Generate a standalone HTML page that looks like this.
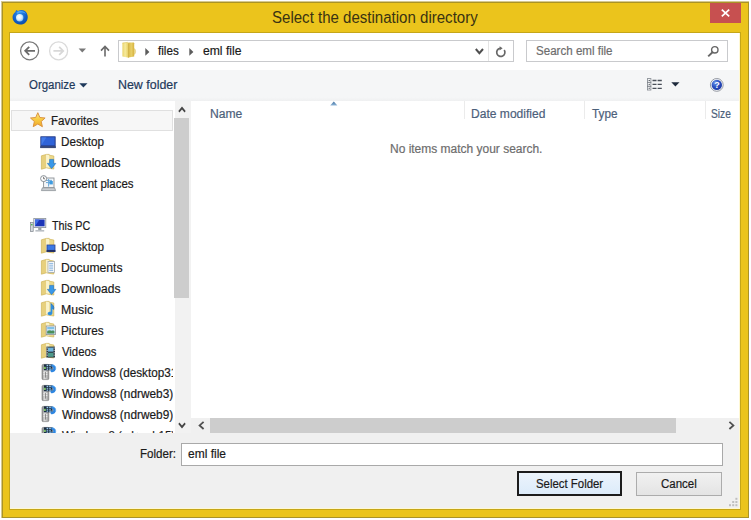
<!DOCTYPE html>
<html lang="en">
<head>
<meta charset="utf-8">
<title>Select the destination directory</title>
<style>
html,body{margin:0;padding:0;background:#fff;}
body{width:751px;height:520px;position:relative;overflow:hidden;font-family:"Liberation Sans",sans-serif;font-size:12px;}
.abs{position:absolute;}
.t{position:absolute;white-space:nowrap;font-family:"Liberation Sans",sans-serif;transform-origin:0 0;-webkit-text-stroke:0.2px currentColor;}
#title{-webkit-text-stroke:0;}
svg{position:absolute;overflow:visible;}
#win{left:1px;top:1px;width:748px;height:517px;background:#ebc41c;}
#wine{left:1px;top:1px;width:747px;height:516px;border-left:1px solid #d6c98f;border-top:1px solid #d6c98f;}
#winb{left:2px;top:2px;width:745px;height:514px;border:1px solid #a99328;}
#content{left:9.6px;top:32.6px;width:730.4px;height:476.2px;background:#fff8d2;box-shadow:0 0 0 1px rgba(160,135,20,.5);}
#content2{left:9.6px;top:32.6px;width:729.4px;height:475.4px;background:#fff;}
#toolbar{left:9.6px;top:69.5px;width:729.4px;height:31px;background:linear-gradient(#f5f6f7 0,#f5f6f7 88%,#eff0f1 100%);}
#footer{left:9.6px;top:433px;width:729.4px;height:75px;background:#f0f0f0;}
#closeb{left:710.4px;top:2.5px;width:30.4px;height:20.2px;background:#c75050;}
#addr{left:118px;top:40px;width:394px;height:20px;border:1px solid #c9cacd;background:#fff;}
#addrdiv{left:488px;top:41px;width:1px;height:20px;background:#e4e4e4;}
#search{left:526px;top:40px;width:200px;height:20px;border:1px solid #c9cacd;background:#fff;}
#favbox{left:11px;top:110px;width:160px;height:19px;border:1px solid #e0e0e0;background:#f7f7f7;}
#navclip{left:9.6px;top:100.8px;width:163.6px;height:332px;overflow:hidden;}
#navsb{left:174.5px;top:100.8px;width:16.5px;height:332.2px;background:#f2f2f2;}
#navthumb{left:174.1px;top:117.7px;width:15px;height:180.8px;background:#cdcdcd;}
#hsb{left:191px;top:417.8px;width:548px;height:15.2px;background:#f0f0f0;}
#hthumb{left:210px;top:417.8px;width:466px;height:15.2px;background:#cdcdcd;}
.coldiv{width:1px;top:100.6px;height:18.6px;background:#ebebeb;}
#finput{left:180.7px;top:443.3px;width:540.6px;height:20.7px;border:1px solid #a9a9a9;background:#fff;}
#bsel_b{left:517px;top:471px;width:101px;height:21.4px;border:2px solid #1c1c1c;background:linear-gradient(#ecf4fc,#dcebfa);}
#bcan_b{left:636px;top:472.4px;width:83.6px;height:21.6px;border:1px solid #acacac;background:linear-gradient(#f1f1f1,#e4e4e4);}
</style>
</head>
<body>
<svg id="shared" width="0" height="0" style="left:0;top:0"><defs><linearGradient id="ndg" x1="0" y1="0" x2="1" y2="0"><stop offset="0" stop-color="#8a8a8a"/><stop offset=".35" stop-color="#dcdcdc"/><stop offset=".7" stop-color="#bdbdbd"/><stop offset="1" stop-color="#8f8f8f"/></linearGradient></defs></svg>
<div id="win" class="abs"></div>
<div id="wine" class="abs"></div>
<div id="winb" class="abs"></div>
<div id="content" class="abs"></div>
<div id="content2" class="abs"></div>
<div id="toolbar" class="abs"></div>
<div id="footer" class="abs"></div>

<!-- title bar -->
<svg id="appicon" style="left:12px;top:9px" width="17" height="17" viewBox="0 0 17 17">
  <defs>
    <radialGradient id="apg" cx=".45" cy=".3" r=".75"><stop offset="0" stop-color="#2f8ff0"/><stop offset=".6" stop-color="#1260c8"/><stop offset="1" stop-color="#0a4aa6"/></radialGradient>
    <radialGradient id="apo" cx=".42" cy=".4" r=".6"><stop offset="0" stop-color="#ffffff"/><stop offset=".6" stop-color="#d9eefa"/><stop offset="1" stop-color="#8cc4ec"/></radialGradient>
  </defs>
  <path d="M3.2 3.2 L4.2 0.9 L6 2 C9.6 -0.2 14.6 1.4 15.6 6.4 C16.6 11.6 12.6 15.8 8 15.6 C3.4 15.4 0.2 11.8 0.6 7.6 C0.8 5.8 1.8 4.2 3.2 3.2 Z" fill="url(#apg)"/>
  <path d="M4.4 3.4 C7.4 1 12.6 1.6 14.4 5.4 C12 3.2 8 3 5.4 4.8 Z" fill="#4aa6f6"/>
  <circle cx="7.7" cy="8.7" r="3.7" fill="url(#apo)"/>
</svg>
<span id="title" class="t" style="left:272.30px;top:8.25px;font-size:16px;line-height:19px;transform:scaleX(0.9402);color:#3a3312;">Select the destination directory</span>
<div id="closeb" class="abs"></div>
<svg style="left:721.1px;top:9.3px" width="9" height="8" viewBox="0 0 9 8"><path d="M0.8 0.6 L8.2 7.4 M8.2 0.6 L0.8 7.4" stroke="#fff" stroke-width="1.7" fill="none"/></svg>

<!-- nav row -->
<svg style="left:19px;top:40px" width="22" height="22" viewBox="0 0 22 22">
  <circle cx="10.6" cy="10.8" r="9" fill="#fff" stroke="#787878" stroke-width="1.3"/>
  <path d="M16 10.8 H6.4 M10.2 6.8 L6.2 10.8 L10.2 14.8" stroke="#6a6a6a" stroke-width="1.8" fill="none"/>
</svg>
<svg style="left:47.5px;top:40px" width="22" height="22" viewBox="0 0 22 22">
  <circle cx="10.6" cy="10.9" r="9" fill="#fff" stroke="#dadada" stroke-width="1.3"/>
  <path d="M5.4 10.9 H15 M11.2 6.9 L15.2 10.9 L11.2 14.9" stroke="#d8d8d8" stroke-width="1.8" fill="none"/>
</svg>
<svg style="left:78.2px;top:48.2px" width="9" height="5" viewBox="0 0 9 5"><path d="M0.6 0.4 H8 L4.3 4.4 Z" fill="#787878"/></svg>
<svg style="left:100.2px;top:45px" width="10" height="12" viewBox="0 0 10 12"><path d="M5 11.4 V1.8 M1 5.6 L5 1.4 L9 5.6" stroke="#6a6a6a" stroke-width="1.6" fill="none"/></svg>

<div id="addr" class="abs"></div>
<div id="addrdiv" class="abs"></div>
<svg id="addrfolder" style="left:121.6px;top:41.6px" width="15" height="17" viewBox="0 0 15 17">
  <defs><linearGradient id="afg" x1="0" y1="0" x2="1" y2="0"><stop offset="0" stop-color="#e9d36a"/><stop offset=".45" stop-color="#f6ea9e"/><stop offset="1" stop-color="#e6cc5c"/></linearGradient>
  <linearGradient id="afg2" x1="0" y1="0" x2="1" y2="0"><stop offset="0" stop-color="#d9b744"/><stop offset=".5" stop-color="#e8cf68"/><stop offset="1" stop-color="#d6b23e"/></linearGradient></defs>
  <path d="M6.4 0.5 L11.8 0.5 L12.2 1.2 V14.4 L6.4 15.4 Z" fill="url(#afg2)"/>
  <path d="M12.2 6.6 C13.3 7 13.6 8.2 13.6 9.6 C13.6 11 13.2 12 12.2 12.4 Z" fill="#ecd98a" stroke="#d8bd5c" stroke-width=".4"/>
  <path d="M0.4 1 L5.6 0.4 L6.6 1.2 V15.8 L5.6 15.6 L0.4 14.6 Z" fill="url(#afg)"/>
  <path d="M6.5 1.2 V15.6" stroke="#c9a83a" stroke-width=".7"/>
  <path d="M0.4 1 L5.6 0.4 L6.6 1.2" fill="none" stroke="#dcc255" stroke-width=".6"/>
</svg>
<svg style="left:144.8px;top:47.6px" width="5" height="8" viewBox="0 0 5 8"><path d="M0.3 0.1 L4.4 3.9 L0.3 7.7 Z" fill="#5c5c5c"/></svg>
<span id="bc1" class="t" style="left:158.00px;top:43.75px;font-size:12.5px;line-height:15px;transform:scaleX(0.9327);color:#1a1a1a;">files</span>
<svg style="left:188.6px;top:47.6px" width="5" height="8" viewBox="0 0 5 8"><path d="M0.3 0.1 L4.4 3.9 L0.3 7.7 Z" fill="#5c5c5c"/></svg>
<span id="bc2" class="t" style="left:202.50px;top:43.75px;font-size:12.5px;line-height:15px;transform:scaleX(0.9712);color:#1a1a1a;">eml file</span>
<svg style="left:475.3px;top:48.2px" width="9" height="7" viewBox="0 0 9 7"><path d="M0.8 1 L4.4 5.2 L8 1" stroke="#4f4f4f" stroke-width="2" fill="none"/></svg>
<svg style="left:495px;top:44.6px" width="12" height="13" viewBox="0 0 12 13">
  <path d="M9.2 5 A4.1 4.1 0 1 1 5 3.3" stroke="#686868" stroke-width="1.7" fill="none"/>
  <path d="M4.6 1.2 L7.6 3.3 L4.6 5.4 Z" fill="#686868"/>
</svg>
<div id="search" class="abs"></div>
<span id="srch" class="t" style="left:535.60px;top:43.75px;font-size:12.5px;line-height:15px;transform:scaleX(0.9260);color:#6d6d6d;">Search eml file</span>
<svg style="left:707.2px;top:45.2px" width="13" height="13" viewBox="0 0 13 13">
  <circle cx="7.8" cy="4.8" r="3.2" fill="none" stroke="#666" stroke-width="1.4"/>
  <path d="M5.5 7.2 L1.2 11.4" stroke="#666" stroke-width="1.9"/>
</svg>

<!-- toolbar -->
<span id="org" class="t" style="left:28.50px;top:77.75px;font-size:12.5px;line-height:15px;transform:scaleX(0.9159);color:#1e395b;">Organize</span>
<svg style="left:78.8px;top:83.3px" width="9" height="5" viewBox="0 0 9 5"><path d="M0.3 0.3 H8.5 L4.4 4.6 Z" fill="#1e395b"/></svg>
<span id="newf" class="t" style="left:118.01px;top:77.75px;font-size:12.5px;line-height:15px;transform:scaleX(0.9934);color:#1e395b;">New folder</span>
<svg id="viewicon" style="left:646.5px;top:77.9px" width="16" height="14" viewBox="0 0 16 14">
  <g fill="#fff" stroke="#7d838a" stroke-width=".8">
    <rect x=".5" y=".6" width="3.4" height="3.6"/><rect x=".5" y="4.5" width="3.4" height="3.6"/><rect x=".5" y="8.4" width="3.4" height="3.6"/>
  </g>
  <g fill="#3f4650"><rect x="1.6" y="1.9" width="1.2" height="1.1"/><rect x="1.6" y="5.8" width="1.2" height="1.1"/><rect x="1.6" y="9.7" width="1.2" height="1.1"/></g>
  <g stroke="#4a5059" stroke-width="1.3">
    <path d="M5.5 2.5 H9.5 M10.6 2.5 H14.8 M5.5 6.4 H9.5 M10.6 6.4 H14.8 M5.5 10.3 H9.5 M10.6 10.3 H14.8"/>
  </g>
</svg>
<svg style="left:671.4px;top:82.3px" width="9" height="5" viewBox="0 0 9 5"><path d="M0.3 0.3 H8.5 L4.4 4.6 Z" fill="#1e2a3c"/></svg>
<svg id="helpicon" style="left:709.2px;top:76.7px" width="16" height="16" viewBox="0 0 16 16">
  <defs><radialGradient id="hpg" cx=".35" cy=".3" r=".8"><stop offset="0" stop-color="#6f97ea"/><stop offset=".5" stop-color="#2a4fc0"/><stop offset="1" stop-color="#1a35a0"/></radialGradient></defs>
  <circle cx="7.8" cy="7.9" r="6.4" fill="#f4f6fa" stroke="#8b9099" stroke-width=".9"/>
  <circle cx="7.8" cy="7.9" r="5.2" fill="url(#hpg)"/>
  <text x="7.9" y="11.1" text-anchor="middle" font-family="Liberation Sans, sans-serif" font-weight="bold" font-size="9" fill="#fff">?</text>
</svg>

<!-- nav pane -->
<div id="navclip" class="abs"><div class="abs" style="left:-9.6px;top:-100.8px;width:200px;height:460px;">
<div id="favbox" class="abs"></div>
<svg style="left:29.8px;top:112.2px" width="16" height="16" viewBox="0 0 16 16"><defs><linearGradient id="stg" x1="0" y1="0" x2="0" y2="1"><stop offset="0" stop-color="#fbe88a"/><stop offset=".45" stop-color="#f8cd45"/><stop offset="1" stop-color="#f0a92a"/></linearGradient></defs><path d="M7.8 0.7 L9.9 5.5 L15.1 6 L11.2 9.5 L12.4 14.7 L7.8 12 L3.2 14.7 L4.4 9.5 L0.5 6 L5.7 5.5 Z" fill="url(#stg)" stroke="#dc9440" stroke-width="1" stroke-linejoin="round"/></svg>
<svg style="left:40px;top:135.7px" width="17" height="13" viewBox="0 0 17 13"><rect x="0.3" y="0.3" width="15.4" height="11.8" rx="0.6" fill="#27408f"/><rect x="1.4" y="1.3" width="13.2" height="8" fill="#2f63d8"/><path d="M1.4 9.3 L6.5 1.3 H1.4 Z" fill="#4d86ee" opacity=".7"/><rect x="0.3" y="10.2" width="15.4" height="1.9" fill="#3a4a78"/></svg>
<svg style="left:41px;top:154.0px" width="16" height="16" viewBox="0 0 16 16"><path d="M0.4 1.8 L5.4 0.4 V13.8 L0.4 15.2 Z" fill="#e7d07e"/><path d="M5.4 0.4 H8.2 V14.4 L5.4 13.8 Z" fill="#faf3c9"/><path d="M8.2 1.2 L12.8 2 V15 L8.2 14.4 Z" fill="#ecd98c"/><path d="M0.4 1.8 L5.4 0.4 H8.2 V1.2 L12.8 2 V15 L8.2 14.4 L5.4 13.8 L0.4 15.2 Z" fill="none" stroke="#d0b458" stroke-width=".7"/><path d="M8.6 5.4 H12.6 V9.4 H14.8 L10.6 14.6 L6.4 9.4 H8.6 Z" fill="#3a98e8" stroke="#1e6fc0" stroke-width=".6"/></svg>
<svg style="left:40px;top:175.3px" width="17" height="17" viewBox="0 0 17 17"><rect x="3.6" y="3" width="10.4" height="9.6" fill="#f4f6f8" stroke="#8a9096" stroke-width=".9"/><path d="M6 5.4 H12 M6 7.6 H12 M8.6 4 V11.6" stroke="#69a7d8" stroke-width="1"/><rect x="9.4" y="6" width="3.4" height="3.4" fill="#3d9be0"/><path d="M2.4 12.8 H14.6 L15.6 15.6 H1.4 Z" fill="#c9cdd1" stroke="#8a9096" stroke-width=".8"/><circle cx="3.6" cy="3.6" r="3" fill="#fff" stroke="#7d848b" stroke-width=".9"/><path d="M3.6 1.8 V3.8 H5" stroke="#555" stroke-width=".8" fill="none"/></svg>
<svg style="left:30px;top:217.6px" width="17" height="15" viewBox="0 0 17 15"><rect x="3.8" y="0.4" width="12" height="9.2" fill="#e8ecf0" stroke="#8a9199" stroke-width=".8"/><rect x="5" y="1.5" width="9.6" height="6.8" fill="#1c35b8"/><path d="M5 8.3 L9.6 1.5 H5 Z" fill="#3f6de6"/><rect x="8.2" y="9.8" width="3.2" height="2.2" fill="#9aa1a8"/><rect x="5.4" y="12" width="8.8" height="1.6" fill="#b9bfc5"/><rect x="0.4" y="4.6" width="2.8" height="9" fill="#d5d9de" stroke="#7f868d" stroke-width=".7"/><rect x="1.1" y="6" width="1.4" height="1.4" fill="#49b04b"/></svg>
<svg style="left:41px;top:238.0px" width="16" height="16" viewBox="0 0 16 16"><path d="M0.4 1.8 L5.4 0.4 V13.8 L0.4 15.2 Z" fill="#e7d07e"/><path d="M5.4 0.4 H8.2 V14.4 L5.4 13.8 Z" fill="#faf3c9"/><path d="M8.2 1.2 L12.8 2 V15 L8.2 14.4 Z" fill="#ecd98c"/><path d="M0.4 1.8 L5.4 0.4 H8.2 V1.2 L12.8 2 V15 L8.2 14.4 L5.4 13.8 L0.4 15.2 Z" fill="none" stroke="#d0b458" stroke-width=".7"/><rect x="5.6" y="6.6" width="8.8" height="7.2" fill="#2a3f8c"/><rect x="6.4" y="7.3" width="7.2" height="4.6" fill="#3a78e4"/><rect x="5.6" y="12.2" width="8.8" height="1.6" fill="#1d2b60"/></svg>
<svg style="left:41px;top:259.0px" width="16" height="16" viewBox="0 0 16 16"><path d="M0.4 1.8 L5.4 0.4 V13.8 L0.4 15.2 Z" fill="#e7d07e"/><path d="M5.4 0.4 H8.2 V14.4 L5.4 13.8 Z" fill="#faf3c9"/><path d="M8.2 1.2 L12.8 2 V15 L8.2 14.4 Z" fill="#ecd98c"/><path d="M0.4 1.8 L5.4 0.4 H8.2 V1.2 L12.8 2 V15 L8.2 14.4 L5.4 13.8 L0.4 15.2 Z" fill="none" stroke="#d0b458" stroke-width=".7"/><rect x="7" y="2.4" width="6.4" height="11" fill="#fbfcfd" stroke="#9aa0a6" stroke-width=".7"/><path d="M8.2 4.4 H12.2 M8.2 6.2 H12.2 M8.2 8 H12.2 M8.2 9.8 H12.2 M8.2 11.6 H12.2" stroke="#6fa3d8" stroke-width=".8"/></svg>
<svg style="left:41px;top:280.0px" width="16" height="16" viewBox="0 0 16 16"><path d="M0.4 1.8 L5.4 0.4 V13.8 L0.4 15.2 Z" fill="#e7d07e"/><path d="M5.4 0.4 H8.2 V14.4 L5.4 13.8 Z" fill="#faf3c9"/><path d="M8.2 1.2 L12.8 2 V15 L8.2 14.4 Z" fill="#ecd98c"/><path d="M0.4 1.8 L5.4 0.4 H8.2 V1.2 L12.8 2 V15 L8.2 14.4 L5.4 13.8 L0.4 15.2 Z" fill="none" stroke="#d0b458" stroke-width=".7"/><path d="M8.6 5.4 H12.6 V9.4 H14.8 L10.6 14.6 L6.4 9.4 H8.6 Z" fill="#3a98e8" stroke="#1e6fc0" stroke-width=".6"/></svg>
<svg style="left:41px;top:301.0px" width="16" height="16" viewBox="0 0 16 16"><path d="M0.4 1.8 L5.4 0.4 V13.8 L0.4 15.2 Z" fill="#e7d07e"/><path d="M5.4 0.4 H8.2 V14.4 L5.4 13.8 Z" fill="#faf3c9"/><path d="M8.2 1.2 L12.8 2 V15 L8.2 14.4 Z" fill="#ecd98c"/><path d="M0.4 1.8 L5.4 0.4 H8.2 V1.2 L12.8 2 V15 L8.2 14.4 L5.4 13.8 L0.4 15.2 Z" fill="none" stroke="#d0b458" stroke-width=".7"/><path d="M9.6 2.4 C11.8 3.6 13.4 5.6 12.6 8.6 L11.4 8 V12.2 C11.4 14.6 6.6 15 6.6 12.6 C6.6 10.8 9 10.4 9.6 10.8 Z" fill="#2f8fe0"/><path d="M9.6 2.4 C11.8 3.6 13.4 5.6 12.6 8.6" fill="none" stroke="#1b5fa8" stroke-width=".7"/></svg>
<svg style="left:41px;top:322.0px" width="16" height="16" viewBox="0 0 16 16"><path d="M0.4 1.8 L5.4 0.4 V13.8 L0.4 15.2 Z" fill="#e7d07e"/><path d="M5.4 0.4 H8.2 V14.4 L5.4 13.8 Z" fill="#faf3c9"/><path d="M8.2 1.2 L12.8 2 V15 L8.2 14.4 Z" fill="#ecd98c"/><path d="M0.4 1.8 L5.4 0.4 H8.2 V1.2 L12.8 2 V15 L8.2 14.4 L5.4 13.8 L0.4 15.2 Z" fill="none" stroke="#d0b458" stroke-width=".7"/><rect x="5.2" y="4" width="9.2" height="8.6" fill="#f6f8fa" stroke="#8b9197" stroke-width=".8"/><rect x="6.2" y="5" width="7.2" height="6.6" fill="#7fc0e8"/><path d="M6.2 9.4 L8.6 7.4 L10.6 9 L12 8 L13.4 9.2 V11.6 H6.2 Z" fill="#4d8f5a"/><path d="M6.2 7.8 H13.4" stroke="#e8f4fb" stroke-width="1"/></svg>
<svg style="left:41px;top:343.0px" width="16" height="16" viewBox="0 0 16 16"><path d="M0.4 1.8 L5.4 0.4 V13.8 L0.4 15.2 Z" fill="#e7d07e"/><path d="M5.4 0.4 H8.2 V14.4 L5.4 13.8 Z" fill="#faf3c9"/><path d="M8.2 1.2 L12.8 2 V15 L8.2 14.4 Z" fill="#ecd98c"/><path d="M0.4 1.8 L5.4 0.4 H8.2 V1.2 L12.8 2 V15 L8.2 14.4 L5.4 13.8 L0.4 15.2 Z" fill="none" stroke="#d0b458" stroke-width=".7"/><rect x="5.4" y="3.6" width="8.6" height="11" fill="#2e3a44"/><rect x="7" y="4.6" width="5.4" height="4" fill="#6fb4dc"/><rect x="7" y="9.8" width="5.4" height="4" fill="#4d9a8a"/><path d="M6.2 4.4 V14.4 M13.2 4.4 V14.4" stroke="#dfe5ea" stroke-width=".9" stroke-dasharray="1.2 1.2"/></svg>
<svg style="left:41px;top:364.1px" width="16" height="17" viewBox="0 0 16 17"><rect x="1" y="0.4" width="6.8" height="15.2" rx="1.2" fill="url(#ndg)" stroke="#777" stroke-width=".6"/><path d="M2.4 8.6 H6.4 M2.4 10.4 H6.4" stroke="#f1f1f1" stroke-width=".9"/><path d="M4.4 8 V13.6" stroke="#6f6f6f" stroke-width=".8"/><rect x="2.8" y="0.3" width="8.8" height="6" fill="#1c2d42"/><rect x="2.8" y="2.8" width="2" height="2.2" fill="#7fbf6a"/><path d="M5.6 1.4 H7.2 M8.2 1.4 H9.8 M5.6 3.3 H7.2 M8.2 3.3 H9.8 M5.6 5.1 H7.2 M8.2 5.1 H10.6" stroke="#9ccdf2" stroke-width="1.1"/><path d="M10.4 0.9 C13.8 0.4 15.4 3.2 14.4 6 C13.8 7.6 12 8.6 9.8 8 L9.4 5.6 C11 6.2 12 5.6 12.2 4.4 C12.4 3.2 11.6 2.6 10.4 2.8 Z" fill="#2f86e0"/><path d="M10.4 0.9 C13.8 0.4 15.4 3.2 14.4 6" fill="none" stroke="#5aa8f0" stroke-width=".8"/></svg>
<svg style="left:41px;top:385.1px" width="16" height="17" viewBox="0 0 16 17"><rect x="1" y="0.4" width="6.8" height="15.2" rx="1.2" fill="url(#ndg)" stroke="#777" stroke-width=".6"/><path d="M2.4 8.6 H6.4 M2.4 10.4 H6.4" stroke="#f1f1f1" stroke-width=".9"/><path d="M4.4 8 V13.6" stroke="#6f6f6f" stroke-width=".8"/><rect x="2.8" y="0.3" width="8.8" height="6" fill="#1c2d42"/><rect x="2.8" y="2.8" width="2" height="2.2" fill="#7fbf6a"/><path d="M5.6 1.4 H7.2 M8.2 1.4 H9.8 M5.6 3.3 H7.2 M8.2 3.3 H9.8 M5.6 5.1 H7.2 M8.2 5.1 H10.6" stroke="#9ccdf2" stroke-width="1.1"/><path d="M10.4 0.9 C13.8 0.4 15.4 3.2 14.4 6 C13.8 7.6 12 8.6 9.8 8 L9.4 5.6 C11 6.2 12 5.6 12.2 4.4 C12.4 3.2 11.6 2.6 10.4 2.8 Z" fill="#2f86e0"/><path d="M10.4 0.9 C13.8 0.4 15.4 3.2 14.4 6" fill="none" stroke="#5aa8f0" stroke-width=".8"/></svg>
<svg style="left:41px;top:406.1px" width="16" height="17" viewBox="0 0 16 17"><rect x="1" y="0.4" width="6.8" height="15.2" rx="1.2" fill="url(#ndg)" stroke="#777" stroke-width=".6"/><path d="M2.4 8.6 H6.4 M2.4 10.4 H6.4" stroke="#f1f1f1" stroke-width=".9"/><path d="M4.4 8 V13.6" stroke="#6f6f6f" stroke-width=".8"/><rect x="2.8" y="0.3" width="8.8" height="6" fill="#1c2d42"/><rect x="2.8" y="2.8" width="2" height="2.2" fill="#7fbf6a"/><path d="M5.6 1.4 H7.2 M8.2 1.4 H9.8 M5.6 3.3 H7.2 M8.2 3.3 H9.8 M5.6 5.1 H7.2 M8.2 5.1 H10.6" stroke="#9ccdf2" stroke-width="1.1"/><path d="M10.4 0.9 C13.8 0.4 15.4 3.2 14.4 6 C13.8 7.6 12 8.6 9.8 8 L9.4 5.6 C11 6.2 12 5.6 12.2 4.4 C12.4 3.2 11.6 2.6 10.4 2.8 Z" fill="#2f86e0"/><path d="M10.4 0.9 C13.8 0.4 15.4 3.2 14.4 6" fill="none" stroke="#5aa8f0" stroke-width=".8"/></svg>
<svg style="left:41px;top:427.1px" width="16" height="17" viewBox="0 0 16 17"><rect x="1" y="0.4" width="6.8" height="15.2" rx="1.2" fill="url(#ndg)" stroke="#777" stroke-width=".6"/><path d="M2.4 8.6 H6.4 M2.4 10.4 H6.4" stroke="#f1f1f1" stroke-width=".9"/><path d="M4.4 8 V13.6" stroke="#6f6f6f" stroke-width=".8"/><rect x="2.8" y="0.3" width="8.8" height="6" fill="#1c2d42"/><rect x="2.8" y="2.8" width="2" height="2.2" fill="#7fbf6a"/><path d="M5.6 1.4 H7.2 M8.2 1.4 H9.8 M5.6 3.3 H7.2 M8.2 3.3 H9.8 M5.6 5.1 H7.2 M8.2 5.1 H10.6" stroke="#9ccdf2" stroke-width="1.1"/><path d="M10.4 0.9 C13.8 0.4 15.4 3.2 14.4 6 C13.8 7.6 12 8.6 9.8 8 L9.4 5.6 C11 6.2 12 5.6 12.2 4.4 C12.4 3.2 11.6 2.6 10.4 2.8 Z" fill="#2f86e0"/><path d="M10.4 0.9 C13.8 0.4 15.4 3.2 14.4 6" fill="none" stroke="#5aa8f0" stroke-width=".8"/></svg>
<span id="n0" class="t" style="left:50.58px;top:113.75px;font-size:12.5px;line-height:15px;transform:scaleX(0.9232);color:#1a1a1a;">Favorites</span><span id="n1" class="t" style="left:60.56px;top:134.75px;font-size:12.5px;line-height:15px;transform:scaleX(0.9353);color:#1a1a1a;">Desktop</span><span id="n2" class="t" style="left:60.54px;top:155.75px;font-size:12.5px;line-height:15px;transform:scaleX(0.9605);color:#1a1a1a;">Downloads</span><span id="n3" class="t" style="left:60.58px;top:176.75px;font-size:12.5px;line-height:15px;transform:scaleX(0.9158);color:#1a1a1a;">Recent places</span><span id="n4" class="t" style="left:52.00px;top:218.75px;font-size:12.5px;line-height:15px;transform:scaleX(0.8621);color:#1a1a1a;">This PC</span><span id="n5" class="t" style="left:60.56px;top:239.75px;font-size:12.5px;line-height:15px;transform:scaleX(0.9353);color:#1a1a1a;">Desktop</span><span id="n6" class="t" style="left:60.53px;top:260.75px;font-size:12.5px;line-height:15px;transform:scaleX(0.9730);color:#1a1a1a;">Documents</span><span id="n7" class="t" style="left:60.54px;top:281.75px;font-size:12.5px;line-height:15px;transform:scaleX(0.9605);color:#1a1a1a;">Downloads</span><span id="n8" class="t" style="left:60.52px;top:302.75px;font-size:12.5px;line-height:15px;transform:scaleX(0.9843);color:#1a1a1a;">Music</span><span id="n9" class="t" style="left:60.56px;top:323.75px;font-size:12.5px;line-height:15px;transform:scaleX(0.9430);color:#1a1a1a;">Pictures</span><span id="n10" class="t" style="left:61.50px;top:344.75px;font-size:12.5px;line-height:15px;transform:scaleX(0.9061);color:#1a1a1a;">Videos</span><span id="n11" class="t" style="left:61.50px;top:365.75px;font-size:12.5px;line-height:15px;transform:scaleX(0.9372);color:#1a1a1a;">Windows8 (desktop31)</span><span id="n12" class="t" style="left:61.50px;top:386.75px;font-size:12.5px;line-height:15px;transform:scaleX(0.9467);color:#1a1a1a;">Windows8 (ndrweb3)</span><span id="n13" class="t" style="left:61.50px;top:407.75px;font-size:12.5px;line-height:15px;transform:scaleX(0.9467);color:#1a1a1a;">Windows8 (ndrweb9)</span><span id="n14" class="t" style="left:61.50px;top:428.75px;font-size:12.5px;line-height:15px;transform:scaleX(0.9150);color:#1a1a1a;">Windows8 (cdrweb15)</span>
</div></div>
<div id="navsb" class="abs"></div>
<div id="navthumb" class="abs"></div>
<svg style="left:177.5px;top:106.4px" width="8" height="7" viewBox="0 0 8 7"><path d="M0.3 5 L4 0.6 L7.7 5 L6.6 6.4 L4 3.4 L1.4 6.4 Z" fill="#454545"/></svg>
<svg style="left:177.5px;top:421.6px" width="8" height="7" viewBox="0 0 8 7"><path d="M0.3 2 L4 6.4 L7.7 2 L6.6 0.6 L4 3.6 L1.4 0.6 Z" fill="#454545"/></svg>

<!-- file list -->
<span id="hname" class="t" style="left:209.63px;top:106.75px;font-size:12.5px;line-height:15px;transform:scaleX(0.9694);color:#4c607a;">Name</span><span id="hdate" class="t" style="left:470.54px;top:106.75px;font-size:12.5px;line-height:15px;transform:scaleX(0.9649);color:#4c607a;">Date modified</span><span id="htype" class="t" style="left:591.50px;top:106.75px;font-size:12.5px;line-height:15px;transform:scaleX(0.9393);color:#4c607a;">Type</span><span id="hsize" class="t" style="left:711.30px;top:106.75px;font-size:12.5px;line-height:15px;transform:scaleX(0.8168);color:#4c607a;">Size</span>
<svg style="left:329.6px;top:100.9px" width="8" height="5" viewBox="0 0 8 5"><defs><linearGradient id="sag" x1="0" y1="0" x2="0" y2="1"><stop offset="0" stop-color="#3f6f9f"/><stop offset="1" stop-color="#8fb6d8"/></linearGradient></defs><path d="M0.2 4.4 L3.8 0.6 L7.4 4.4 Z" fill="url(#sag)"/></svg>
<div class="abs coldiv" style="left:464.3px"></div>
<div class="abs coldiv" style="left:584.3px"></div>
<div class="abs coldiv" style="left:705.2px"></div>
<span id="noit" class="t" style="left:389.54px;top:141.75px;font-size:12.5px;line-height:15px;transform:scaleX(0.9581);color:#6d6d6d;">No items match your search.</span>
<div id="hsb" class="abs"></div>
<div id="hthumb" class="abs"></div>
<svg style="left:197.5px;top:421px" width="7" height="9" viewBox="0 0 7 9"><path d="M5.6 0.8 L1.6 4.4 L5.6 8" stroke="#505050" stroke-width="1.8" fill="none"/></svg>
<svg style="left:727.5px;top:421px" width="7" height="9" viewBox="0 0 7 9"><path d="M1.4 0.8 L5.4 4.4 L1.4 8" stroke="#505050" stroke-width="1.8" fill="none"/></svg>

<!-- footer -->
<span id="flab" class="t" style="left:139.88px;top:446.75px;font-size:12.5px;line-height:15px;transform:scaleX(0.9244);color:#1a1a1a;">Folder:</span>
<div id="finput" class="abs"></div>
<span id="fval" class="t" style="left:188.00px;top:446.75px;font-size:12.5px;line-height:15px;transform:scaleX(0.9586);color:#1a1a1a;">eml file</span>
<div id="bsel_b" class="abs"></div>
<span id="bsel" class="t" style="left:536.00px;top:476.75px;font-size:12.5px;line-height:15px;transform:scaleX(0.9118);color:#1a1a1a;">Select Folder</span>
<div id="bcan_b" class="abs"></div>
<span id="bcan" class="t" style="left:661.40px;top:476.75px;font-size:12.5px;line-height:15px;transform:scaleX(0.9205);color:#1a1a1a;">Cancel</span>
<svg id="grip" style="left:727px;top:497px" width="12" height="12" viewBox="0 0 12 12">
  <g fill="#bfbfbf"><rect x="8.4" y="0.8" width="2" height="2"/><rect x="5.2" y="4" width="2" height="2"/><rect x="8.4" y="4" width="2" height="2"/><rect x="2" y="7.2" width="2" height="2"/><rect x="5.2" y="7.2" width="2" height="2"/><rect x="8.4" y="7.2" width="2" height="2"/></g>
</svg>
</body>
</html>
